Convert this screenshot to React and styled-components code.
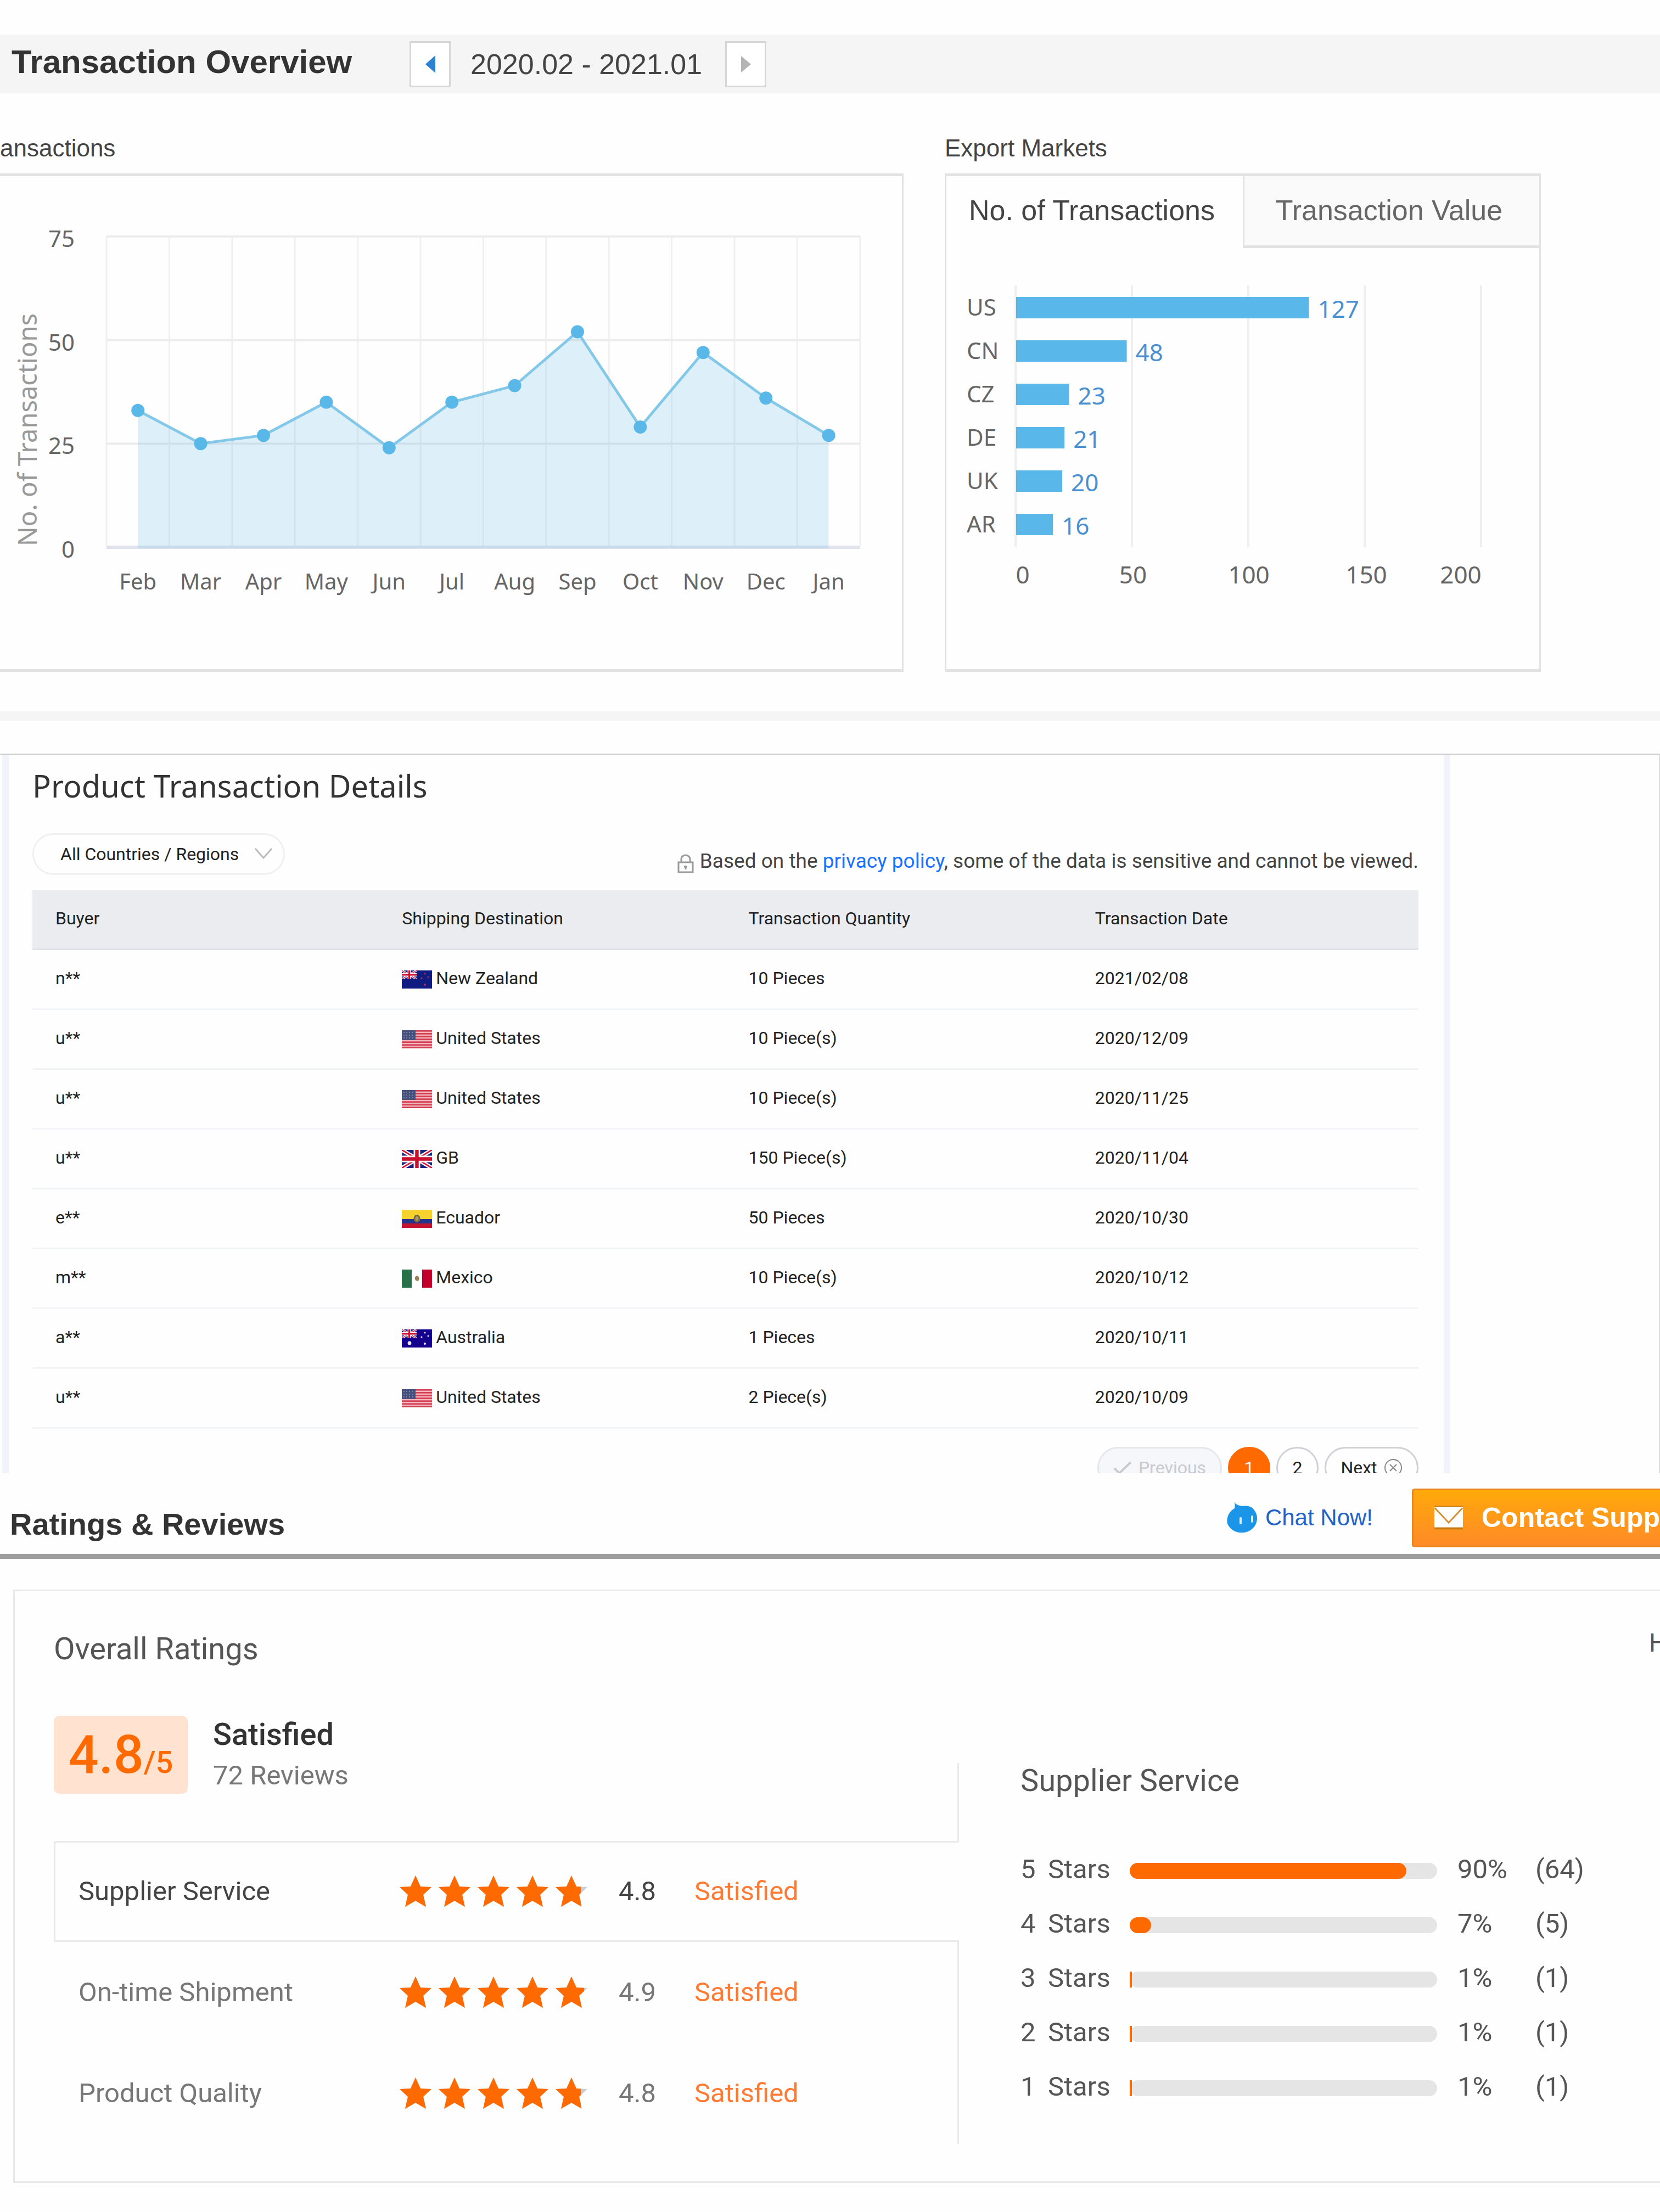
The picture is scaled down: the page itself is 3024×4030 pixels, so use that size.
import React from "react";
import styled, { createGlobalStyle, css } from "styled-components";

const arial = `"Liberation Sans", Arial, sans-serif`;
const noto = `"Noto Sans", "Open Sans", sans-serif`;
const roboto = `Roboto, sans-serif`;

const GlobalStyle = createGlobalStyle`
  *, *::before, *::after { box-sizing: border-box; }
  body { margin: 0; background: #fefefe; color: #333; font-family: ${roboto}; }
  h1, h2, h3, p, dl, ul { margin: 0; padding: 0; }
  button, select { font: inherit; color: inherit; margin: 0; cursor: pointer; }
`;

const Page = styled.main`
  padding: 63px 0 48px;
  overflow: hidden;
`;

/* ---------- Transaction overview ---------- */

const OverviewBar = styled.header`
  display: flex;
  align-items: center;
  height: 107px;
  padding-left: 21px;
  background: #f5f5f5;
  font-family: ${arial};
`;

const OverviewTitle = styled.h1`
  width: 725px;
  padding-bottom: 8px;
  font-size: 60px;
  line-height: 64px;
  color: #333;
`;

const Period = styled.div`
  display: flex;
  align-items: center;
  gap: 36px;
  font-size: 52px;
  line-height: 60px;
  color: #444;
`;

const PeriodText = styled.span`
  min-width: 428px;
`;

const StepButton = styled.button`
  display: grid;
  place-items: center;
  width: 75px;
  height: 84px;
  padding: 0;
  background: #fff;
  border: 3px solid #d6d6d6;
  color: ${(p) => (p.$active ? "#2d82d3" : "#b4b4b4")};
`;

const Charts = styled.section`
  display: grid;
  grid-template-columns: 1646fr 1086fr 217fr;
  column-gap: 75px;
  padding: 62px 0 72px;
  margin-right: -75px;
  border-bottom: 17px solid #f5f5f5;
  font-family: ${arial};
`;

const ChartTitle = styled.h2`
  height: 84px;
  padding-top: 14px;
  font-size: 44px;
  line-height: 48px;
  font-weight: 400;
  color: #444;
`;

const ChartPanel = styled.div`
  height: 908px;
  border: 3px solid #e2e2e2;
  border-top-width: 5px;
  border-bottom-width: 5px;
  ${(p) => p.$open && css`border-left: 0;`}
`;

const Tabs = styled.div`
  display: grid;
  grid-template-columns: 1fr 1fr;
`;

const Tab = styled.button`
  height: 131px;
  padding: 0 10px 8px 0;
  font-size: 52px;
  border: 0;
  color: ${(p) => (p.$active ? "#444" : "#666")};
  background: ${(p) => (p.$active ? "transparent" : "#fafafa")};
  ${(p) =>
    !p.$active &&
    css`
      padding-bottom: 3px;
      border-left: 3px solid #e2e2e2;
      border-bottom: 5px solid #e2e2e2;
    `}
`;

const Plot = styled.svg`
  display: block;
  width: 100%;
  height: auto;
  font-family: ${noto};
`;

/* ---------- Product transaction details ---------- */

const DetailsFrame = styled.section`
  margin-top: 60px;
  padding: 0 380px 0 4px;
  border-top: 2px solid #ccc;
  border-right: 2px solid #ddd;
`;

const DetailsCard = styled.div`
  padding: 18px 46px 0 43px;
  border-left: 12px solid #f1f2fa;
  border-right: 12px solid #f1f2fa;
`;

const DetailsTitle = styled.h2`
  font-family: ${noto};
  font-size: 56px;
  line-height: 76px;
  font-weight: 400;
  color: #333;
`;

const Tools = styled.div`
  display: flex;
  justify-content: space-between;
  align-items: flex-end;
  margin: 49px 0 28px;
`;

const SelectWrap = styled.label`
  position: relative;
  display: block;
`;

const RegionSelect = styled.select`
  appearance: none;
  width: 460px;
  height: 76px;
  padding: 0 56px 0 48px;
  font-size: 32px;
  color: #222;
  background: transparent;
  border: 3px solid #f0f0f0;
  border-radius: 38px;
`;

const SelectArrow = styled.svg`
  position: absolute;
  right: 22px;
  top: 26px;
  pointer-events: none;
`;

const Privacy = styled.p`
  display: flex;
  align-items: center;
  gap: 11px;
  padding-bottom: 3px;
  font-size: 37px;
  line-height: 44px;
  color: #444;
  white-space: nowrap;
`;

const LockIcon = styled.svg`
  margin-top: 8px;
`;

const Link = styled.a`
  color: #1a71ff;
  text-decoration: none;
`;

const Table = styled.table`
  width: 100%;
  table-layout: fixed;
  border-collapse: collapse;
  font-size: 32px;
  line-height: 38px;
  text-align: left;
  color: #222;
`;

const HeadCell = styled.th`
  height: 107px;
  padding: 0 0 3px 42px;
  font-weight: 400;
  background: #ebecf0;
  border-bottom: 3px solid #dfe1e8;
`;

const Cell = styled.td`
  height: 109px;
  padding: 0 0 4px 42px;
  border-bottom: 3px solid #f3f4f8;
`;

const Country = styled.span`
  display: flex;
  align-items: center;
  gap: 7px;
`;

const FlagSvg = styled.svg`
  margin-top: 6px;
`;

const PagerWindow = styled.div`
  height: 81px;
  padding-top: 33px;
  overflow: hidden;
`;

const Pager = styled.nav`
  display: flex;
  justify-content: flex-end;
  gap: 11px;
`;

const PageButton = styled.button`
  display: flex;
  align-items: center;
  justify-content: center;
  gap: 12px;
  flex: none;
  width: ${(p) => p.$width || 77}px;
  height: 76px;
  padding: 0;
  font-size: 32px;
  border-radius: 38px;
  border: 3px solid #d0d1d6;
  background: #fefefe;
  color: #222;
  &:disabled {
    color: #c9cacf;
    background: #f6f7fa;
    border-color: #e6e7eb;
  }
  &[aria-current] {
    color: #fff;
    background: #ff6a00;
    border-color: #ff6a00;
  }
`;

/* ---------- Ratings & reviews ---------- */

const RatingsBar = styled.header`
  display: flex;
  align-items: center;
  justify-content: space-between;
  height: 156px;
  padding-left: 18px;
  border-bottom: 9px solid #9d9d9d;
`;

const RatingsTitle = styled.h2`
  font-family: ${arial};
  font-size: 56px;
  line-height: 64px;
  font-weight: 700;
  color: #333;
  padding-top: 40px;
`;

const Actions = styled.div`
  display: flex;
  align-items: center;
  gap: 71px;
  padding-top: 16px;
`;

const ChatLink = styled.a`
  display: flex;
  align-items: center;
  gap: 15px;
  font-family: ${arial};
  font-size: 42px;
  color: #2163c9;
  text-decoration: none;
`;

const ContactButton = styled.button`
  display: flex;
  align-items: center;
  gap: 34px;
  width: 452px;
  height: 107px;
  padding: 0 0 0 38px;
  overflow: hidden;
  white-space: nowrap;
  font-family: ${arial};
  font-size: 50px;
  font-weight: 700;
  color: #fff;
  border: 3px solid #e8851c;
  border-right: 0;
  border-radius: 5px 0 0 5px;
  background: linear-gradient(#ffa90a, #ff8a28);
`;

const RatingsCard = styled.section`
  margin: 56px 0 0 24px;
  padding: 72px 0 68px 71px;
  border: 3px solid #e9e9e9;
  border-right: 0;
`;

const CardHead = styled.div`
  display: flex;
  justify-content: space-between;
  height: 155px;
  padding-bottom: 10px;
`;

const CardTitle = styled.h3`
  font-size: 56px;
  line-height: 66px;
  font-weight: 400;
  color: #555;
`;

const Clipped = styled.span`
  width: 20px;
  overflow: hidden;
  font-size: 46px;
  line-height: 44px;
  color: #555;
`;

const Columns = styled.div`
  display: grid;
  grid-template-columns: 1649fr 1277fr;
`;

const Summary = styled.div`
  display: flex;
  gap: 46px;
  height: 228px;
`;

const ScoreBadge = styled.p`
  display: flex;
  align-items: baseline;
  justify-content: center;
  width: 244px;
  height: 142px;
  padding-top: 17px;
  border-radius: 10px;
  background: #ffe3d0;
  color: #ff6a00;
  font-size: 97px;
  line-height: 108px;
  font-weight: 500;
`;

const OutOf = styled.span`
  font-size: 56px;
`;

const Verdict = styled.strong`
  display: block;
  padding-top: 1px;
  font-size: 56px;
  line-height: 66px;
  font-weight: 500;
  color: #333;
`;

const ReviewCount = styled.span`
  display: block;
  padding-top: 13px;
  font-size: 49px;
  line-height: 58px;
  color: #777;
`;

const LeftColumn = styled.div``;

const SummaryArea = styled.div`
  display: grid;
  grid-template-columns: 1fr 3px;
`;

const Divider = styled.i`
  margin-top: 86px;
  background: #eaeaea;
`;

const Aspect = styled.button`
  display: grid;
  grid-template-columns: 585px 399px 138px 1fr;
  align-items: center;
  width: 100%;
  height: 184px;
  padding: 0 0 0 45px;
  text-align: left;
  font-size: 49px;
  background: transparent;
  border: 0;
  border-right: 3px solid #eaeaea;
  color: #777;
  ${(p) =>
    p.$active &&
    css`
      color: #444;
      padding-left: 42px;
      border: 3px solid #eaeaea;
      border-right: 0;
    `}
`;

const AspectVerdict = styled.span`
  color: #ff7a33;
`;

const Breakdown = styled.div`
  padding: 85px 0 0 112px;
`;

const StarRow = styled.div`
  display: grid;
  grid-template-columns: 50px 149px 560px 37px 142px 1fr;
  align-items: center;
  height: 99px;
  font-size: 49px;
  line-height: 58px;
  color: #555;
`;

const StarRows = styled.div`
  margin-top: 80px;
  height: 495px;
`;

const Track = styled.div`
  height: 29px;
  margin-top: 5px;
  border-radius: 15px;
  background: #e5e5e5;
`;

const Fill = styled.div`
  height: 100%;
  border-radius: 15px;
  background: #ff6a00;
  ${(p) =>
    p.$sliver &&
    css`
      max-width: 4px;
      border-radius: 0;
    `}
`;

/* ---------- Data ---------- */

const months = [
  ["Feb", 33], ["Mar", 25], ["Apr", 27], ["May", 35], ["Jun", 24], ["Jul", 35],
  ["Aug", 39], ["Sep", 52], ["Oct", 29], ["Nov", 47], ["Dec", 36], ["Jan", 27],
];

const markets = [["US", 127], ["CN", 48], ["CZ", 23], ["DE", 21], ["UK", 20], ["AR", 16]];

const orders = [
  ["n**", "nz", "New Zealand", "10 Pieces", "2021/02/08"],
  ["u**", "us", "United States", "10 Piece(s)", "2020/12/09"],
  ["u**", "us", "United States", "10 Piece(s)", "2020/11/25"],
  ["u**", "gb", "GB", "150 Piece(s)", "2020/11/04"],
  ["e**", "ec", "Ecuador", "50 Pieces", "2020/10/30"],
  ["m**", "mx", "Mexico", "10 Piece(s)", "2020/10/12"],
  ["a**", "au", "Australia", "1 Pieces", "2020/10/11"],
  ["u**", "us", "United States", "2 Piece(s)", "2020/10/09"],
];

const aspects = [
  ["Supplier Service", 4.8],
  ["On-time Shipment", 4.9],
  ["Product Quality", 4.8],
];

const stars = [[5, 90, 64], [4, 7, 5], [3, 1, 1], [2, 1, 1], [1, 1, 1]];

/* ---------- Charts ---------- */

function LineChart() {
  const x = (i) => 194 + 114.4 * i;
  const y = (v) => 676 - v * 7.55;
  const pts = months.map(([, v], i) => [x(i + 0.5), y(v)]);
  const line = pts.map((p) => p.join(",")).join(" ");
  return (
    <Plot viewBox="0 0 1643 898" role="img" aria-label="Transactions per month">
      {months.concat([0]).map((_, i) => (
        <path key={i} d={`M${x(i)} 110V674`} stroke="#f0f0f0" strokeWidth="3" />
      ))}
      {[75, 50, 25].map((v) => (
        <path key={v} d={`M194 ${y(v)}H1567`} stroke="#ececec" strokeWidth="4" />
      ))}
      <path d="M194 676H1567" stroke="#e0e2ec" strokeWidth="6" />
      <polygon points={`${x(0.5)},678 ${line} ${x(11.5)},678`} fill="#5ab7ea" fillOpacity="0.2" />
      <polyline points={line} fill="none" stroke="#83c8e8" strokeWidth="5" />
      {pts.map(([cx, cy]) => (
        <circle key={cx} cx={cx} cy={cy} r="12" fill="#5ab8e8" />
      ))}
      {[75, 50, 25, 0].map((v) => (
        <text key={v} x="136" y={y(v) + 19} textAnchor="end" fontSize="42" fill="#666">{v}</text>
      ))}
      {months.map(([m], i) => (
        <text key={m} x={x(i + 0.5)} y="753" textAnchor="middle" fontSize="40" fill="#666">{m}</text>
      ))}
      <text transform="translate(67 674) rotate(-90)" fontSize="47" fill="#999">No. of Transactions</text>
    </Plot>
  );
}

function BarChart() {
  const left = 127;
  return (
    <Plot viewBox="0 0 1080 767" role="img" aria-label="Transactions per export market">
      {[0, 1, 2, 3, 4].map((i) => (
        <path key={i} d={`M${left - 1 + i * 212} 68V545`} stroke="#efefef" strokeWidth="4" />
      ))}
      {markets.map(([name, v], i) => (
        <g key={name}>
          <text x="37" y={123 + i * 79} fontSize="42" fill="#666">{name}</text>
          <rect x={left} y={89 + i * 79} width={v * 4.2} height="39" fill="#5ab7e9" />
          <text x={left + v * 4.2 + 16} y={127 + i * 79} fontSize="44" fill="#4a90d0">{v}</text>
        </g>
      ))}
      {[[0, 139], [50, 340], [100, 551], [150, 765], [200, 937]].map(([v, x]) => (
        <text key={v} x={x} y="611" textAnchor="middle" fontSize="44" fill="#666">{v}</text>
      ))}
    </Plot>
  );
}

/* ---------- Drawings ---------- */

function UnionJack({ w, h }) {
  return (
    <svg width={w} height={h} viewBox="0 0 60 36" preserveAspectRatio="none">
      <rect width="60" height="36" fill="#1a237e" />
      <path d="M0 0L60 36M60 0L0 36" stroke="#fff" strokeWidth="8" />
      <path d="M0 0L60 36M60 0L0 36" stroke="#d2143a" strokeWidth="3" />
      <path d="M30 0V36M0 18H60" stroke="#fff" strokeWidth="13" />
      <path d="M30 0V36M0 18H60" stroke="#c8102e" strokeWidth="7" />
    </svg>
  );
}

function Flag({ code }) {
  return (
    <FlagSvg width="55" height="33" viewBox="0 0 55 33" aria-hidden="true">
      {code === "gb" && <UnionJack w="55" h="33" />}
      {(code === "nz" || code === "au") && (
        <>
          <rect width="55" height="33" fill={code === "nz" ? "#101c80" : "#14008c"} />
          <UnionJack w="27" h="16" />
          <g fill={code === "nz" ? "#b0305c" : "#e8e8ff"}>
            <circle cx="42" cy="6" r="1.6" />
            <circle cx="36" cy="14" r="1.6" />
            <circle cx="48" cy="12" r="1.6" />
            <circle cx="42" cy="26" r="2" />
          </g>
          {code === "au" && <circle cx="14" cy="25" r="3.4" fill="#e8e8ff" />}
        </>
      )}
      {code === "us" && (
        <>
          <rect width="55" height="33" fill="#f5b5bd" />
          {[0, 1, 2, 3, 4, 5, 6].map((i) => (
            <rect key={i} y={i * 5.08} width="55" height="2.6" fill="#d23c50" />
          ))}
          <rect width="25" height="17.8" fill="#46507c" />
          <path d="M3 4H23M3 9H23M3 14H23" stroke="#8f96b5" strokeWidth="1.4" strokeDasharray="2 3" />
        </>
      )}
      {code === "ec" && (
        <>
          <rect width="55" height="17" fill="#f5d22d" />
          <rect y="17" width="55" height="8" fill="#27348b" />
          <rect y="25" width="55" height="8" fill="#c1122f" />
          <ellipse cx="27.5" cy="16" rx="6" ry="7" fill="#7c6b3c" />
          <ellipse cx="27.5" cy="16" rx="3" ry="4" fill="#a79a6a" />
        </>
      )}
      {code === "mx" && (
        <>
          <rect width="55" height="33" fill="#fff" />
          <rect width="18" height="33" fill="#27704a" />
          <rect x="37" width="18" height="33" fill="#c1002b" />
          <path d="M24 14q4-6 7 0q2 6-3 7q-5-1-4-7z" fill="#97825a" />
        </>
      )}
    </FlagSvg>
  );
}

const starPath = "M29 0L38 20L58 21L43 35L48 57L29 46L10 57L15 35L0 21L20 20Z";

function Stars({ score, id }) {
  return (
    <svg width="342" height="58" viewBox="0 0 342 58" role="img" aria-label={`${score} of 5 stars`}>
      <clipPath id={id}>
        <rect width={284 + (score - 4) * 58} height="58" />
      </clipPath>
      {[0, 1, 2, 3, 4].map((i) => (
        <path key={i} d={starPath} transform={`translate(${i * 71} 0)`} fill="#c8ced2" />
      ))}
      <g clipPath={`url(#${id})`}>
        {[0, 1, 2, 3, 4].map((i) => (
          <path key={i} d={starPath} transform={`translate(${i * 71} 0)`} fill="#ff6a00" />
        ))}
      </g>
    </svg>
  );
}

/* ---------- Page ---------- */

export default function App() {
  return (
    <Page>
      <GlobalStyle />
      <OverviewBar>
        <OverviewTitle>Transaction Overview</OverviewTitle>
        <Period>
          <StepButton $active aria-label="Previous period">
            <svg width="18" height="32" viewBox="0 0 18 32"><path d="M18 0V32L0 16Z" fill="currentColor" /></svg>
          </StepButton>
          <PeriodText>2020.02 - 2021.01</PeriodText>
          <StepButton aria-label="Next period">
            <svg width="18" height="30" viewBox="0 0 18 30"><path d="M0 0V30L18 15Z" fill="currentColor" /></svg>
          </StepButton>
        </Period>
      </OverviewBar>

      <Charts>
        <div>
          <ChartTitle>ansactions</ChartTitle>
          <ChartPanel $open><LineChart /></ChartPanel>
        </div>
        <div>
          <ChartTitle>Export Markets</ChartTitle>
          <ChartPanel>
            <Tabs role="tablist">
              <Tab role="tab" aria-selected="true" $active>No. of Transactions</Tab>
              <Tab role="tab" aria-selected="false">Transaction Value</Tab>
            </Tabs>
            <BarChart />
          </ChartPanel>
        </div>
      </Charts>

      <DetailsFrame>
        <DetailsCard>
          <DetailsTitle>Product Transaction Details</DetailsTitle>
          <Tools>
            <SelectWrap>
              <RegionSelect aria-label="Country or region" defaultValue="all">
                <option value="all">All Countries / Regions</option>
              </RegionSelect>
              <SelectArrow width="34" height="22" viewBox="0 0 34 22">
                <path d="M2 2L17 19L32 2" fill="none" stroke="#bbb" strokeWidth="3" />
              </SelectArrow>
            </SelectWrap>
            <Privacy>
              <LockIcon width="30" height="35" viewBox="0 0 30 35" fill="none" stroke="#999" strokeWidth="3">
                <path d="M2 15H28V33H2ZM7 15V9a8 7 0 0 1 16 0V15M15 21V28M12 23H18" />
              </LockIcon>
              <span>
                Based on the <Link href="#privacy">privacy policy</Link>, some of the data is sensitive and cannot be viewed.
              </span>
            </Privacy>
          </Tools>
          <Table>
            <thead>
              <tr>
                <HeadCell>Buyer</HeadCell>
                <HeadCell>Shipping Destination</HeadCell>
                <HeadCell>Transaction Quantity</HeadCell>
                <HeadCell>Transaction Date</HeadCell>
              </tr>
            </thead>
            <tbody>
              {orders.map(([buyer, code, country, quantity, date]) => (
                <tr key={date}>
                  <Cell>{buyer}</Cell>
                  <Cell><Country><Flag code={code} />{country}</Country></Cell>
                  <Cell>{quantity}</Cell>
                  <Cell>{date}</Cell>
                </tr>
              ))}
            </tbody>
          </Table>
          <PagerWindow>
            <Pager aria-label="Pages">
              <PageButton disabled $width={227}>
                <svg width="34" height="26" viewBox="0 0 34 26"><path d="M2 14L11 23L32 3" fill="none" stroke="currentColor" strokeWidth="4" /></svg>
                Previous
              </PageButton>
              <PageButton aria-current="page">1</PageButton>
              <PageButton>2</PageButton>
              <PageButton $width={171}>
                Next
                <svg width="34" height="34" viewBox="0 0 34 34" fill="none" stroke="#888" strokeWidth="2">
                  <circle cx="17" cy="17" r="15" />
                  <path d="M11 11L23 23M23 11L11 23" />
                </svg>
              </PageButton>
            </Pager>
          </PagerWindow>
        </DetailsCard>
      </DetailsFrame>

      <RatingsBar>
        <RatingsTitle>Ratings &amp; Reviews</RatingsTitle>
        <Actions>
          <ChatLink href="#chat">
            <svg width="56" height="58" viewBox="0 0 56 58">
              <path d="M14 0C17 5 22 7 29 8C34 7 43 7 48 12A28 26 0 0 1 54 40A28 26 0 0 1 2 40A27 26 0 0 1 15 12C16 8 16 4 14 0Z" fill="#1a95e8" />
              <path d="M26 30V39M47 27V36" stroke="#d5edff" strokeWidth="4" strokeLinecap="round" />
            </svg>
            Chat Now!
          </ChatLink>
          <ContactButton>
            <svg width="56" height="46" viewBox="0 0 56 46">
              <rect width="56" height="46" fill="#c77a12" />
              <rect y="2" width="56" height="40" fill="#fff" />
              <path d="M1 4L28 33L55 4" fill="none" stroke="#d98a2b" strokeWidth="3" />
            </svg>
            Contact Supp
          </ContactButton>
        </Actions>
      </RatingsBar>

      <RatingsCard>
        <CardHead>
          <CardTitle>Overall Ratings</CardTitle>
          <Clipped>H</Clipped>
        </CardHead>
        <Columns>
          <LeftColumn>
            <SummaryArea>
              <Summary>
                <ScoreBadge>4.8<OutOf>/5</OutOf></ScoreBadge>
                <div>
                  <Verdict>Satisfied</Verdict>
                  <ReviewCount>72 Reviews</ReviewCount>
                </div>
              </Summary>
              <Divider />
            </SummaryArea>
            {aspects.map(([name, score], i) => (
              <Aspect key={name} $active={i === 0}>
                <span>{name}</span>
                <Stars score={score} id={`stars-${i}`} />
                <span>{score}</span>
                <AspectVerdict>Satisfied</AspectVerdict>
              </Aspect>
            ))}
          </LeftColumn>
          <Breakdown>
            <CardTitle>Supplier Service</CardTitle>
            <StarRows>
              {stars.map(([n, percent, count]) => (
                <StarRow key={n}>
                  <span>{n}</span>
                  <span>Stars</span>
                  <Track>
                    <Fill $sliver={percent < 2} style={{ width: `${percent}%` }} />
                  </Track>
                  <span />
                  <span>{percent}%</span>
                  <span>({count})</span>
                </StarRow>
              ))}
            </StarRows>
          </Breakdown>
        </Columns>
      </RatingsCard>
    </Page>
  );
}
